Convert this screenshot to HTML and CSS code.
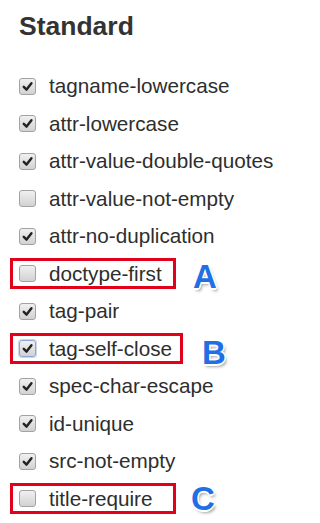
FILE: index.html
```html
<!DOCTYPE html>
<html>
<head>
<meta charset="utf-8">
<link rel="stylesheet" href="styles.css">
</head>
<body>
<h1 class="title">Standard</h1>
<ul class="rules">
  <li class="rule"><span class="cb checked"><svg viewBox="0 0 16 16"><path d="M4 8.3 L7 11.3 L12.2 4.6"/></svg></span><span class="name">tagname-lowercase</span></li>
  <li class="rule"><span class="cb checked"><svg viewBox="0 0 16 16"><path d="M4 8.3 L7 11.3 L12.2 4.6"/></svg></span><span class="name">attr-lowercase</span></li>
  <li class="rule"><span class="cb checked"><svg viewBox="0 0 16 16"><path d="M4 8.3 L7 11.3 L12.2 4.6"/></svg></span><span class="name">attr-value-double-quotes</span></li>
  <li class="rule"><span class="cb"></span><span class="name">attr-value-not-empty</span></li>
  <li class="rule"><span class="cb checked"><svg viewBox="0 0 16 16"><path d="M4 8.3 L7 11.3 L12.2 4.6"/></svg></span><span class="name">attr-no-duplication</span></li>
  <li class="rule"><span class="mark"><span class="cb"></span><span class="name">doctype-first</span></span><span class="tag">A</span></li>
  <li class="rule"><span class="cb checked"><svg viewBox="0 0 16 16"><path d="M4 8.3 L7 11.3 L12.2 4.6"/></svg></span><span class="name">tag-pair</span></li>
  <li class="rule"><span class="mark"><span class="cb checked focus"><svg viewBox="0 0 16 16"><path d="M4 8.3 L7 11.3 L12.2 4.6"/></svg></span><span class="name">tag-self-close</span></span><span class="tag tag-b">B</span></li>
  <li class="rule"><span class="cb checked"><svg viewBox="0 0 16 16"><path d="M4 8.3 L7 11.3 L12.2 4.6"/></svg></span><span class="name">spec-char-escape</span></li>
  <li class="rule"><span class="cb checked"><svg viewBox="0 0 16 16"><path d="M4 8.3 L7 11.3 L12.2 4.6"/></svg></span><span class="name">id-unique</span></li>
  <li class="rule"><span class="cb checked"><svg viewBox="0 0 16 16"><path d="M4 8.3 L7 11.3 L12.2 4.6"/></svg></span><span class="name">src-not-empty</span></li>
  <li class="rule"><span class="mark"><span class="cb"></span><span class="name">title-require</span></span><span class="tag tag-c">C</span></li>
</ul>
</body>
</html>
```
FILE: styles.css
```css
html, body {
  margin: 0;
  background: #ffffff;
}
body {
  padding: 11px 0 0 19px;
  font-family: "Liberation Sans", Arial, sans-serif;
  color: #2e2e2e;
}
.title {
  margin: 0;
  font-size: 26.5px;
  line-height: 30px;
  font-weight: 700;
  color: #333333;
}
.rules {
  list-style: none;
  margin: 26.25px 0 0 0;
  padding: 0;
}
.rule {
  height: 37.5px;
  display: flex;
  align-items: center;
  font-size: 20.7px;
}
.cb {
  box-sizing: border-box;
  width: 17px;
  height: 17px;
  flex: none;
  border: 1px solid #a3a3a3;
  border-radius: 3px;
  background: linear-gradient(#f0f0f0, #d2d2d2);
  display: flex;
  align-items: center;
  justify-content: center;
}
.cb svg {
  width: 15px;
  height: 15px;
}
.cb svg path {
  fill: none;
  stroke: #222222;
  stroke-width: 2.6;
  stroke-linecap: round;
  stroke-linejoin: round;
}
.cb.focus {
  border-color: #8aa8d8;
  box-shadow: 0 0 0 1px #c7d6ef;
}
.name {
  margin-left: 13px;
  white-space: nowrap;
}
.mark {
  box-sizing: border-box;
  display: flex;
  align-items: center;
  height: 31px;
  min-width: 166px;
  margin-left: -9px;
  padding: 0 8px 0 6px;
  border: 3px solid #e3001b;
}
.tag {
  margin-left: 17px;
  margin-top: 5px;
  font-size: 33px;
  line-height: 1;
  font-weight: 700;
  color: #1f6fe5;
  text-shadow:
    1.5px 0 0 #fff, -1.5px 0 0 #fff, 0 1.5px 0 #fff, 0 -1.5px 0 #fff,
    1px 1px 0 #fff, -1px -1px 0 #fff, 1px -1px 0 #fff, -1px 1px 0 #fff,
    2px 3px 3px rgba(0, 0, 0, 0.35);
}
.tag-b {
  margin-left: 19px;
  margin-top: 8px;
}
.tag-c {
  margin-left: 15px;
  margin-top: 0;
}
```
